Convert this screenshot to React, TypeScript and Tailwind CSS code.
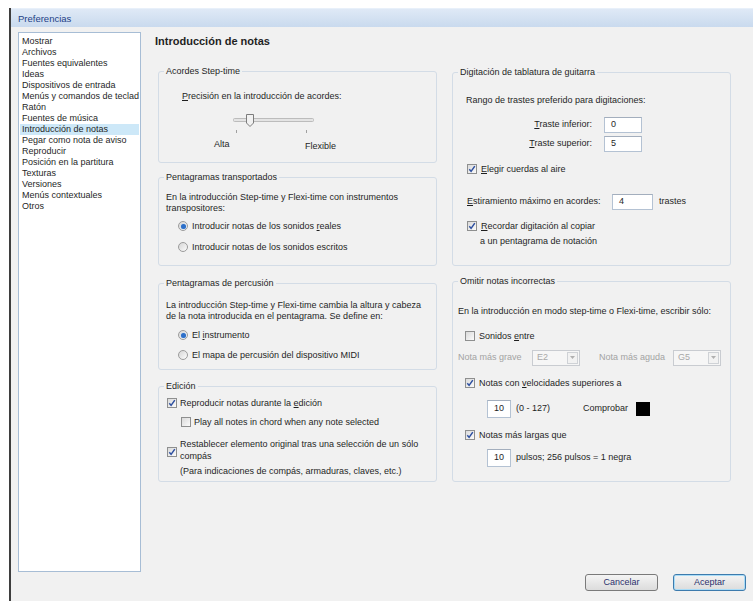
import cx from 'clsx';
import React from 'react';

const pages = [
  'Mostrar',
  'Archivos',
  'Fuentes equivalentes',
  'Ideas',
  'Dispositivos de entrada',
  'Menús y comandos de teclad',
  'Ratón',
  'Fuentes de música',
  'Introducción de notas',
  'Pegar como nota de aviso',
  'Reproducir',
  'Posición en la partitura',
  'Texturas',
  'Versiones',
  'Menús contextuales',
  'Otros',
];

const Check = ({ checked, className }: { checked?: boolean; className?: string }) => (
  <span
    className={cx(
      'flex h-[10px] w-[10px] shrink-0 items-center justify-center border border-[#8e8f8f] bg-linear-to-br from-[#dadada] to-[#fbfbfb]',
      className,
    )}
  >
    {checked && (
      <svg width="8" height="8" viewBox="0 0 8 8">
        <path d="M1.3 4.3 L3.1 6.4 L6.8 1.1" fill="none" stroke="#2d4fa0" strokeWidth="1.5" />
      </svg>
    )}
  </span>
);

const Radio = ({ on }: { on?: boolean }) => (
  <span className="flex h-[10px] w-[10px] shrink-0 items-center justify-center rounded-full border border-[#9b9b9b] bg-linear-to-br from-[#d6d6d6] to-[#fcfcfc]">
    {on && <span className="h-[5px] w-[5px] rounded-full bg-[#2d6fc8] shadow-[0_0_1px_#7fb2ec]" />}
  </span>
);

const TextBox = ({ value, className }: { value: string; className?: string }) => (
  <div
    className={cx(
      'flex items-center border border-[#b4c2d3] border-t-[#a3aebd] bg-white pl-[6px]',
      className,
    )}
  >
    {value}
  </div>
);

const Combo = ({ value }: { value: string }) => (
  <div className="flex h-[16px] w-[48px] items-center border border-[#c9ccd1] bg-[#f6f6f6] pl-[4px] text-[#a8a8a8]">
    <span className="flex-1">{value}</span>
    <span className="mr-[1px] flex h-[12px] w-[11px] items-center justify-center border border-[#cfd2d6] bg-[#f2f2f2]">
      <svg width="5" height="3" viewBox="0 0 5 3">
        <path d="M0 0 L5 0 L2.5 3 Z" fill="#b0b0b0" />
      </svg>
    </span>
  </div>
);

const Group = ({
  title,
  className,
  children,
}: {
  title: string;
  className?: string;
  children: React.ReactNode;
}) => (
  <fieldset className={cx('rounded-[3px] border border-[#d3dce6]', className)}>
    <legend className="ml-[5px] px-[2px] leading-[11px]">{title}</legend>
    {children}
  </fieldset>
);

const Slider = () => (
  <svg width="84" height="22" viewBox="0 0 84 22" className="ml-[73px] mt-[10px] block">
    <rect x="1.5" y="6.5" width="80" height="3" rx="1" fill="#e4e4e4" stroke="#bcbcbc" />
    <path
      d="M14.5 2.5 H21.5 V11 L18 14.5 L14.5 11 Z"
      fill="#f1f1f1"
      stroke="#7c7c7c"
      strokeLinejoin="round"
    />
    <line x1="4.5" y1="18" x2="4.5" y2="21" stroke="#a0a0a0" />
    <line x1="74.5" y1="18" x2="74.5" y2="21" stroke="#a0a0a0" />
  </svg>
);

const Button = ({ label, focused }: { label: string; focused?: boolean }) => (
  <button
    className={cx(
      'flex h-[17px] w-[73px] items-center justify-center rounded-[3px] border bg-linear-to-b from-[#f4f4f4] to-[#dcdcdc] text-[#2b2f6c]',
      focused ? 'border-[#3d7bad] shadow-[inset_0_0_0_1px_#a9dcf7]' : 'border-[#7a7a7a]',
    )}
  >
    {label}
  </button>
);

export default function App() {
  return (
    <div className="h-[601px] w-[753px] bg-white pl-[9px] pt-[8px] font-['Liberation_Sans',Arial,sans-serif] text-[9px] leading-[11px] text-[#1f1f1f]">
      <div className="flex h-full flex-col border-l-2 border-[#3e3e3e] bg-[#f1f1f1]">
        <div className="flex h-[19px] items-center border-t border-[#e8f0fa] bg-linear-to-b from-[#dfe9f6] to-[#c9daee] pl-[7px] text-[9.5px] text-[#1d4187]">
          Preferencias
        </div>

        <div className="flex h-[545px]">
          <aside className="ml-[7px] mt-[5px] h-[540px] w-[123px] overflow-hidden border border-[#a7bdd5] bg-white px-[1px] pt-[3px]">
            {pages.map((p) => (
              <div
                key={p}
                className={cx(
                  'h-[11px] whitespace-nowrap pl-[2px] leading-[11px]',
                  p === 'Introducción de notas' && 'bg-[#cde8f8]',
                )}
              >
                {p}
              </div>
            ))}
          </aside>

          <main className="ml-[14px] flex-1 pt-[7px]">
            <h1 className="text-[11px] font-bold leading-[14px]">Introducción de notas</h1>

            <div className="ml-[3px] mt-[17.5px] grid grid-cols-[279px_279px] gap-x-[15px]">
              {/* left column */}
              <div className="flex flex-col">
                <Group title="Acordes Step-time" className="h-[97.5px]">
                  <div className="pl-[23px] pt-[14px]">
                    <u>P</u>recisión en la introducción de acordes:
                  </div>
                  <Slider />
                  <div className="mt-[5px] flex">
                    <span className="ml-[55px] w-[91px]">Alta</span>
                    <span className="mt-[2px]">Flexible</span>
                  </div>
                </Group>

                <Group title="Pentagramas transportados" className="mt-[8.5px] h-[94.5px]">
                  <div className="pl-[7px] pt-[9px]">
                    En la introducción Step-time y Flexi-time con instrumentos
                    <br />
                    transpositores:
                  </div>
                  <div className="mt-[6px] flex h-[13px] items-center pl-[19px]">
                    <Radio on />
                    <span className="ml-[4px]">
                      Introducir notas de los sonidos <u>r</u>eales
                    </span>
                  </div>
                  <div className="mt-[8px] flex h-[13px] items-center pl-[19px]">
                    <Radio />
                    <span className="ml-[4px]">Introducir notas de los sonidos escritos</span>
                  </div>
                </Group>

                <Group title="Pentagramas de percusión" className="mt-[11.5px] h-[92.5px]">
                  <div className="pl-[7px] pt-[11px]">
                    La introducción Step-time y Flexi-time cambia la altura y cabeza
                    <br />
                    de la nota introducida en el pentagrama. Se define en:
                  </div>
                  <div className="mt-[7px] flex h-[13px] items-center pl-[19px]">
                    <Radio on />
                    <span className="ml-[4px]">
                      El <u>i</u>nstrumento
                    </span>
                  </div>
                  <div className="mt-[7px] flex h-[13px] items-center pl-[19px]">
                    <Radio />
                    <span className="ml-[4px]">El mapa de percusión del dispositivo MIDI</span>
                  </div>
                </Group>

                <Group title="Edición" className="mt-[10.5px] h-[101.5px]">
                  <div className="mt-[5px] flex h-[13px] items-center pl-[8px]">
                    <Check checked />
                    <span className="ml-[3px]">
                      Reproducir notas durante la <u>e</u>dición
                    </span>
                  </div>
                  <div className="mt-[6px] flex h-[13px] items-center pl-[22px]">
                    <Check />
                    <span className="ml-[3px]">Play all notes in chord when any note selected</span>
                  </div>
                  <div className="mt-[9px] flex items-center pl-[8px]">
                    <Check checked className="mt-[4px]" />
                    <span className="ml-[3px] leading-[12px]">
                      Restablecer elemento original tras una selección de un sólo
                      <br />
                      compás
                    </span>
                  </div>
                  <div className="mt-[4px] pl-[21px]">
                    (Para indicaciones de compás, armaduras, claves, etc.)
                  </div>
                </Group>
              </div>

              {/* right column */}
              <div className="flex flex-col">
                <Group title="Digitación de tablatura de guitarra" className="mt-[1px] h-[199.5px]">
                  <div className="pl-[13px] pt-[17px]">Rango de trastes preferido para digitaciones:</div>
                  <div className="mt-[11px] flex items-center">
                    <span className="w-[139px] text-right">
                      <u>T</u>raste inferior:
                    </span>
                    <TextBox value="0" className="ml-[12px] h-[16px] w-[38px]" />
                  </div>
                  <div className="mt-[3px] flex items-center">
                    <span className="w-[139px] text-right">
                      <u>T</u>raste superior:
                    </span>
                    <TextBox value="5" className="ml-[12px] h-[16px] w-[38px]" />
                  </div>
                  <div className="mt-[11px] flex h-[13px] items-center pl-[14px]">
                    <Check checked />
                    <span className="ml-[4px]">
                      <u>E</u>legir cuerdas al aire
                    </span>
                  </div>
                  <div className="mt-[18px] flex items-center pl-[14px]">
                    <span className="w-[145px]">
                      <u>E</u>stiramiento máximo en acordes:
                    </span>
                    <TextBox value="4" className="h-[16px] w-[41px]" />
                    <span className="ml-[6px]">trastes</span>
                  </div>
                  <div className="mt-[10px] flex h-[13px] items-center pl-[14px]">
                    <Check checked />
                    <span className="ml-[4px]">
                      <u>R</u>ecordar digitación al copiar
                    </span>
                  </div>
                  <div className="mt-[3px] pl-[27px]">a un pentagrama de notación</div>
                </Group>

                <Group title="Omitir notas incorrectas" className="mt-[9.5px] h-[206.5px]">
                  <div className="pl-[5px] pt-[19px]">
                    En la introducción en modo step-time o Flexi-time, escribir sólo:
                  </div>
                  <div className="mt-[13px] flex h-[13px] items-center pl-[12px]">
                    <Check />
                    <span className="ml-[4px]">
                      Sonidos <u>e</u>ntre
                    </span>
                  </div>
                  <div className="mt-[7px] flex items-center pl-[5px] text-[#a3a3a3]">
                    <span className="w-[74px]">Nota más grave</span>
                    <Combo value="E2" />
                    <span className="ml-[19px] w-[74px]">Nota más aguda</span>
                    <Combo value="G5" />
                  </div>
                  <div className="mt-[11px] flex h-[13px] items-center pl-[12px]">
                    <Check checked />
                    <span className="ml-[4px]">
                      Notas con <u>v</u>elocidades superiores a
                    </span>
                  </div>
                  <div className="mt-[10px] flex items-center pl-[34px]">
                    <TextBox value="10" className="h-[18px] w-[24px] pl-[4px]" />
                    <span className="ml-[5px] w-[67px]">(0 - 127)</span>
                    <span className="w-[53px]">Comprobar</span>
                    <span className="h-[14px] w-[14px] bg-black" />
                  </div>
                  <div className="mt-[11px] flex h-[13px] items-center pl-[12px]">
                    <Check checked />
                    <span className="ml-[4px]">
                      Notas más lar<u>g</u>as que
                    </span>
                  </div>
                  <div className="mt-[7px] flex items-center pl-[34px]">
                    <TextBox value="10" className="h-[18px] w-[24px] pl-[4px]" />
                    <span className="ml-[5px]">pulsos; 256 pulsos = 1 negra</span>
                  </div>
                </Group>
              </div>
            </div>
          </main>
        </div>

        <div className="flex justify-end gap-[15px] pr-[7px] pt-[2px]">
          <Button label="Cancelar" />
          <Button label="Aceptar" focused />
        </div>
      </div>
    </div>
  );
}
